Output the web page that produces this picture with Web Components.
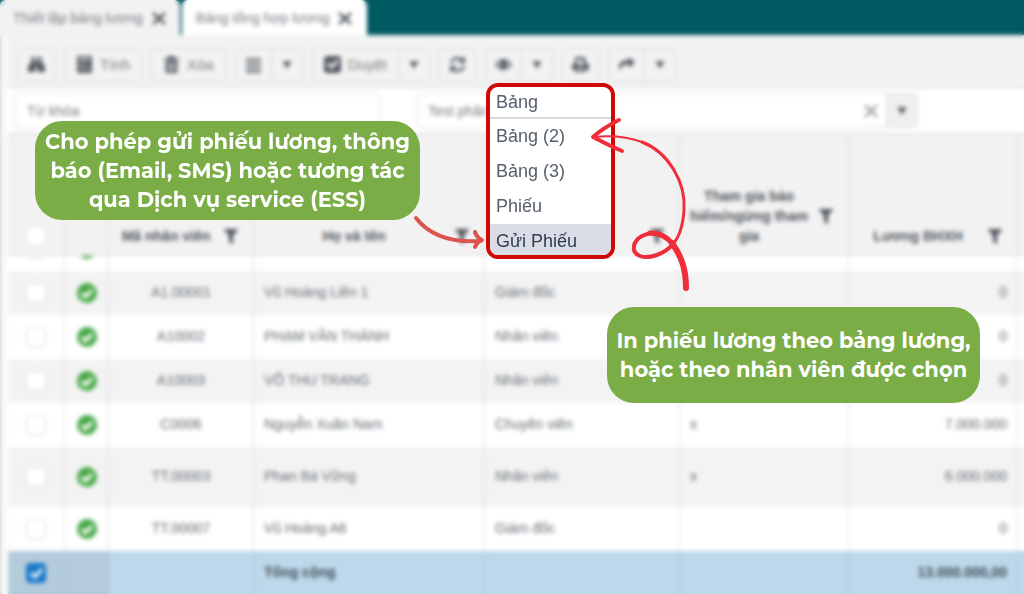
<!DOCTYPE html>
<html lang="vi">
<head>
<meta charset="utf-8">
<title>Bảng tổng hợp lương</title>
<style>
html, body { margin: 0; height: 100%; }
body { font: 14px/20px "Liberation Sans", Arial, sans-serif; color: #5c646c; background: #fff; overflow: hidden; }
</style>
</head>
<body>
<payroll-page></payroll-page>
<script>
const define = (name, html, init) => {
  const template = document.createElement('template');
  template.innerHTML = html;
  customElements.define(name, class extends HTMLElement {
    constructor() {
      super();
      this.attachShadow({ mode: 'open' }).append(template.content.cloneNode(true));
    }
    connectedCallback() { if (init) init(this, this.shadowRoot); }
  });
};

const ICONS = {
  close: '<path d="M2 3l12 11M14 3L2 14" fill="none" stroke="currentColor" stroke-width="2.4"/>',
  thin: '<path d="M2 2l12 12M14 2L2 14" fill="none" stroke="currentColor" stroke-width="2"/>',
  find: '<path d="M3 1h4v3H3zM9 1h4v3H9zM2.6 5H7v10H0v-4zM9 5h4.4L16 11v4H9zM7 5h2v5H7z"/>',
  calc: '<path fill-rule="evenodd" d="M1 0h14v16H1zM3 2v2h10V2zM3 7v2h2V7zm4 0v2h2V7zm-4 4v2h2v-2zm4 0v2h2v-2zm4 0v2h2v-2z"/>',
  trash: '<path fill-rule="evenodd" d="M5 0h6v2h4v2H1V2h4zM2.500 5h11v11h-11zM5 7v7h1.200V7zm2.400 0v7h1.200V7zm2.400 0v7H11V7z"/>',
  list: '<path d="M1 2h14v2H1zM1 6h14v2H1zM1 10h14v2H1zM1 14h14v2H1z"/>',
  check: '<path fill-rule="evenodd" d="M3 0h10q3 0 3 3v10q0 3-3 3H3q-3 0-3-3V3q0-3 3-3zM2.500 8l4.500 4.500 7-7L12 3.500l-5 5L4.500 6z"/>',
  refresh: '<path d="M2 7a6 6 0 0 1 10.500-3M14 9a6 6 0 0 1-10.500 3" fill="none" stroke="currentColor" stroke-width="2.200"/><path d="M15 0v6.500H8.500zM1 16V9.500h6.500z"/>',
  eye: '<path fill-rule="evenodd" d="M0 8q8-10.500 16 0-8 10.500-16 0zm2.500 0Q4 10.500 6 11 3.500 8 6 5 4 5.500 2.500 8zm11 0Q12 5.500 10 5q2.500 3 0 6 2-.5 3.500-3z"/>',
  print: '<path fill-rule="evenodd" d="M3 1h8l2 2v4h1q2 0 2 2v4h-3v2H3v-2H0V9q0-2 2-2h1zm2 2v5h6V5H9V3zM5 11v2h6v-2z"/>',
  share: '<path d="M10 1l6 5-6 5V8Q3 7 2 14-2 4 10 4z"/>',
  caret: '<path d="M2 3h12l-6 10z"/>',
  filter: '<path d="M1 1h14v1L10 7.500V16l-4-2V7.500L1 2z"/>',
  ok: '<circle cx="8" cy="8" r="8" fill="#46a845"/><path d="M3.800 8.200l3 3 5.400-5.600" fill="none" stroke="#fff" stroke-width="2.600"/>'
};

define('ui-icon', `<style>:host{display:inline-flex;flex:none;width:16px;height:16px}svg{width:100%;height:100%;fill:currentColor}</style>
<svg viewBox="0 0 16 16" aria-hidden="true"></svg>`,
  (el, root) => { root.querySelector('svg').innerHTML = ICONS[el.getAttribute('name')]; });

define('page-tab', `<style>
:host{display:flex;align-items:center;gap:8px;height:35px;box-sizing:border-box;padding:0 13px;background:#f2f2f2;border-radius:6px 6px 0 0;color:#7b8086}
:host([active]){background:#fff;height:37px;padding:0 14px 2px}
a{color:inherit;text-decoration:none;white-space:nowrap}
button{all:unset;display:flex;color:#4c5258}
</style><a href="#"><slot></slot></a><button aria-label="Đóng"><ui-icon name="close"></ui-icon></button>`);

define('tool-button', `<style>
:host{display:flex;box-sizing:border-box;height:34px;border:1px solid #dcdcdc;border-radius:4px;font-size:15px;color:#545b63}
button{all:unset;display:flex;align-items:center;justify-content:center;gap:7px;padding:0 9px}
:host([labelled]) .main{padding:0 11px}
.label{color:#7b8086}
:host(:not([labelled])) .label{display:none}
.more{display:none;width:30px;padding:0;border-left:1px solid #dcdcdc}
:host([split]) .more{display:flex}
.more ui-icon{width:12px;height:12px}
.main ui-icon{width:17px;height:17px}
</style><button class="main"><ui-icon></ui-icon><span class="label"><slot></slot></span></button>
<button class="more" aria-label="Thêm"><ui-icon name="caret"></ui-icon></button>`,
  (el, root) => {
    const icon = document.createElement('ui-icon');
    icon.setAttribute('name', el.getAttribute('icon'));
    root.querySelector('.main ui-icon').replaceWith(icon);
    root.querySelector('.main').setAttribute('aria-label', el.textContent.trim() || el.getAttribute('icon'));
  });

define('tool-bar', `<style>
:host{display:flex;align-items:center;gap:9px;box-sizing:border-box;height:53px;padding:8px 10px 0;background:#f2f2f2;border-bottom:2px solid #e3e3e3}
</style><slot></slot>`);

define('filter-bar', `<style>
:host{display:flex;align-items:center;gap:37px;box-sizing:border-box;height:47px;padding:0 6px;background:#fff;border-bottom:2px solid #e3e3e3}
input{font:inherit;color:#7b8086;border:0;outline:0;background:none;min-width:0;box-sizing:border-box}
input::placeholder{color:#7b8086;opacity:1}
.search,.combo{height:35px;box-sizing:border-box;border:1px solid #dedede;border-radius:4px}
.search{flex:0 1 366px;padding:0 12px}
.combo{display:flex;align-items:center;flex:0 1 501px;overflow:hidden}
.combo input{flex:1;padding:0 10px}
button{all:unset;display:flex;align-items:center;justify-content:center;width:30px;height:100%;color:#8b9197}
.open{background:#efefef;border-left:1px solid #dcdcdc;color:#4c5258}
.open ui-icon{width:12px;height:12px}
</style><input class="search" placeholder="Từ khóa" aria-label="Từ khóa">
<div class="combo"><input value="Test phân" aria-label="Bảng lương"><button aria-label="Xóa"><ui-icon name="thin"></ui-icon></button><button class="open" aria-label="Mở"><ui-icon name="caret"></ui-icon></button></div>`);

const ROWS = [
  ['', '', '', '', ''],
  ['A1.00001', 'Vũ Hoàng Liên 1', 'Giám đốc', '', '0'],
  ['A10002', 'PHẠM VĂN THÀNH', 'Nhân viên', '', '0'],
  ['A10003', 'VÕ THU TRANG', 'Nhân viên', '', '0'],
  ['C0006', 'Nguyễn Xuân Nam', 'Chuyên viên', 'x', '7.000.000'],
  ['TT.00003', 'Phan Bá Vững', 'Nhân viên', 'x', '6.000.000'],
  ['TT.00007', 'Vũ Hoàng A6', 'Giám đốc', '', '0']
];
const head = text => `<th><div class="head"><span>${text}</span><ui-icon name="filter"></ui-icon></div></th>`;

define('data-grid', `<style>
:host{display:block;min-height:0;overflow:auto;scrollbar-width:none}
table{width:100%;table-layout:fixed;border-collapse:separate;border-spacing:0;font-size:14px}
th,td{box-sizing:border-box;padding:0 10px;border-right:1px solid #dedede}
td{height:44px;padding-bottom:2px;text-align:left;color:#6c7278}
th{position:sticky;top:0;z-index:1;height:121px;padding:0 0 9px;vertical-align:bottom;background:#f2f2f2;border-bottom:1px solid #e0e0e0;color:#545a62}
th:last-child,td:last-child{border-right:0;padding:0}
.head{display:flex;align-items:center;min-height:20px;padding-right:14px}
.head span{flex:1;padding:0 8px;text-align:center}
tbody tr:nth-child(even){background:#f3f3f3}
tbody tr:nth-child(6) td{height:60px}
td:nth-child(-n+3){text-align:center}
td:nth-child(-n+2){padding:0}
td:nth-child(7){text-align:right}
tfoot td{height:43px;background:#bcd8ea;border-color:#aec8d9;font-weight:bold;color:#46525c}
tfoot td:nth-child(-n+2){background:#b3cbdb}
input{appearance:none;display:block;margin:0 auto;width:20px;height:20px;box-sizing:border-box;border:1px solid #dcdcdc;border-radius:4px;background:#fff}
input:checked{border-color:#1679ca;background:#1679ca url('data:image/svg+xml,<svg xmlns="http://www.w3.org/2000/svg" viewBox="0 0 18 18"><path d="M4 9l4 4 7-8" fill="none" stroke="white" stroke-width="3"/></svg>')}
td ui-icon{display:flex;width:20px;height:20px;margin:0 auto}
</style>
<table>
<colgroup><col style="width:57px"><col style="width:44px"><col style="width:145px"><col style="width:231px"><col style="width:195px"><col style="width:169px"><col style="width:169px"><col></colgroup>
<thead><tr><th><input type="checkbox" aria-label="Chọn tất cả"></th><th></th>${head('Mã nhân viên')}${head('Họ và tên')}${head('')}${head('Tham gia bảo hiểm/ngừng tham gia')}${head('Lương BHXH')}<th></th></tr></thead>
<tbody>${ROWS.map(r => `<tr><td><input type="checkbox" aria-label="Chọn ${r[0]}"></td><td><ui-icon name="ok"></ui-icon></td>${r.map(c => `<td>${c}</td>`).join('')}<td></td></tr>`).join('')}</tbody>
<tfoot><tr><td><input type="checkbox" checked aria-label="Chọn tổng cộng"></td><td></td><td></td><td>Tổng cộng</td><td></td><td></td><td>13.000.000,00</td><td></td></tr></tfoot>
</table>`, el => { el.scrollTop = 29; });

define('option-menu', `<style>
:host{display:block;box-sizing:border-box;width:129px;border:4px solid #cf0a06;border-radius:12px;background:#fff;overflow:hidden;font-size:18px;line-height:35px;color:#56616d}
</style><div role="menu"><slot></slot></div>`);

define('menu-option', `<style>
:host{display:block}
button{all:unset;display:block;box-sizing:border-box;width:100%;padding:0 6px;white-space:nowrap}
:host([first]) button{height:32px;line-height:30px;border-bottom:2px solid #dadada}
:host([selected]) button{height:31px;background:#dadde5;color:#2f3c4f}
</style><button role="menuitem"><slot></slot></button>`);

define('call-out', `<style>
:host{display:flex;align-items:center;justify-content:center;box-sizing:border-box;border-radius:27px;background:#7aad45;color:#fff;font:700 21px/29px Montserrat,Inter,"Open Sans",sans-serif;text-align:center}
p{margin:0;white-space:nowrap}
</style><p><slot></slot></p>`);

define('guide-arrows', `<style>:host{display:block;width:300px;height:200px}svg{display:block;fill:none;stroke-linecap:round;stroke-linejoin:round}</style>
<svg width="300" height="200" viewBox="400 100 300 200" aria-hidden="true">
<g stroke="#dc544d" stroke-width="4"><path d="M416 218C430 236 452 243 481 241"/><path d="M475 232Q477 238 482 240Q477 242 475 247"/></g>
<g stroke="#f02d3a"><path stroke-width="2" d="M594 137Q620 134 642 142"/>
<path stroke-width="3" d="M642 142C668 152 686 182 684 210C683 226 680 236 673 244"/>
<path stroke-width="4" d="M673 244C664 255 648 259 640 256C630 252 633 241 642 236Q648 233 654 233"/>
<path stroke-width="5" d="M650 233C662 233 669 239 673 245"/>
<path stroke-width="6" d="M672 243C681 256 686 268 686 288"/>
<path stroke-width="4" d="M619 120Q603 128 593 137Q608 145 622 151"/></g></svg>`);

define('payroll-page', `<style>
:host{display:block;position:relative;height:100vh;min-height:500px}
.app{display:flex;flex-direction:column;height:100%;isolation:isolate}
nav{display:flex;gap:2px;height:35px;flex:none;background:#005a61}
main{display:flex;flex-direction:column;flex:1;min-height:0;margin-left:2px;border-left:6px solid #fbfbfb;box-shadow:-2px 0 #dedede}
tool-bar{flex:none}
filter-bar{flex:none}
data-grid{flex:1}
.veil{position:absolute;inset:0;backdrop-filter:blur(2px);pointer-events:none}
option-menu,call-out,guide-arrows{position:absolute}
option-menu{left:486px;top:83px}
.send{left:35px;top:121px;width:385px;height:99px}
.print{left:607px;top:307px;width:373px;height:96px}
guide-arrows{left:400px;top:100px;pointer-events:none}
</style>
<div class="app">
<nav><page-tab>Thiết lập bảng lương</page-tab><page-tab active>Bảng tổng hợp lương</page-tab></nav>
<main>
<tool-bar>
<tool-button icon="find"></tool-button>
<tool-button icon="calc" labelled>Tính</tool-button>
<tool-button icon="trash" labelled>Xóa</tool-button>
<tool-button icon="list" split></tool-button>
<tool-button icon="check" labelled split>Duyệt</tool-button>
<tool-button icon="refresh"></tool-button>
<tool-button icon="eye" split></tool-button>
<tool-button icon="print"></tool-button>
<tool-button icon="share" split></tool-button>
</tool-bar>
<filter-bar></filter-bar>
<data-grid></data-grid>
</main>
</div>
<div class="veil"></div>
<option-menu><menu-option first>Bảng</menu-option><menu-option>Bảng (2)</menu-option><menu-option>Bảng (3)</menu-option><menu-option>Phiếu</menu-option><menu-option selected>Gửi Phiếu</menu-option></option-menu>
<call-out class="send">Cho phép gửi phiếu lương, thông<br>báo (Email, SMS) hoặc tương tác<br>qua Dịch vụ service (ESS)</call-out>
<call-out class="print">In phiếu lương theo bảng lương,<br>hoặc theo nhân viên được chọn</call-out>
<guide-arrows></guide-arrows>`);
</script>
</body>
</html>
